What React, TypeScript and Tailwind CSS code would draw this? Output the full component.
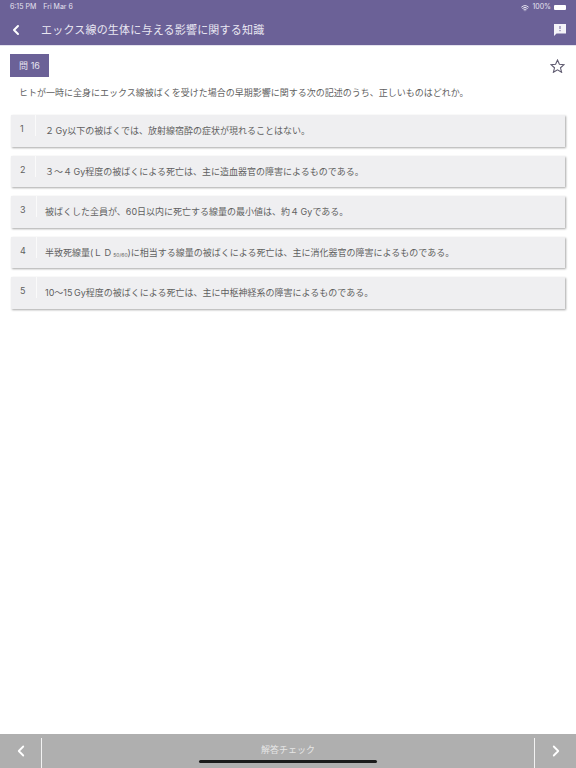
import React from 'react';
import { ChevronLeft, ChevronRight, Wifi } from 'lucide-react';

const Gy = () => <span className="ml-[1.5px]">Gy</span>;

const choices: { no: string; text: React.ReactNode; line: string; pad: string }[] = [
    { no: '1', line: 'w-[25px]', pad: 'pl-[9px]', text: <>２<Gy />以下の被ばくでは、放射線宿酔の症状が現れることはない。</> },
    { no: '2', line: 'w-[25px]', pad: 'pl-[9px]', text: <>３～４<Gy />程度の被ばくによる死亡は、主に造血器官の障害によるものである。</> },
    { no: '3', line: 'w-[26px]', pad: 'pl-[8px]', text: <>被ばくした全員が、60日以内に死亡する線量の最小値は、約４<Gy />である。</> },
    {
        no: '4',
        line: 'w-[26px]',
        pad: 'pl-[8px]',
        text: (
            <>
                半致死線量(<span className="tracking-[1px]">ＬＤ</span><span className="align-[-1px] text-[5px]">50/60</span>)に相当する線量の被ばくによる死亡は、主に消化器官の障害によるものである。
            </>
        ),
    },
    { no: '5', line: 'w-[26px]', pad: 'pl-[8px]', text: <>10～15<Gy />程度の被ばくによる死亡は、主に中枢神経系の障害によるものである。</> },
];

export default function App() {
    return (
        <div className="relative flex h-[768px] w-[576px] flex-col overflow-hidden bg-white font-['Inter','Noto_Sans_CJK_JP',sans-serif] text-[#5f5f5f]">
            <header className="h-[46px] shrink-0 border-b border-[#e4e2ee] bg-[#6b6197] text-white">
                <div className="flex h-[14px] items-center justify-between px-[10px] pt-[1px] text-[7px] text-[#e6e3f0]">
                    <div className="flex gap-[7px]">
                        <span>6:15 PM</span>
                        <span>Fri Mar 6</span>
                    </div>
                    <div className="flex items-center gap-[3px]">
                        <Wifi size={8} strokeWidth={3} />
                        <span>100%</span>
                        <div className="h-[5px] w-[12px] rounded-[1px] bg-white" />
                    </div>
                </div>
                <div className="flex h-[31px] items-center pl-[8px] pr-[10px]">
                    <ChevronLeft size={16} strokeWidth={3} className="shrink-0" />
                    <h1 className="ml-[17px] flex-1 pt-[1px] text-[11px] tracking-[0.2px] text-[#e9e7f2]">エックス線の生体に与える影響に関する知識</h1>
                    <svg width="12" height="12" viewBox="0 0 12 12">
                        <path d="M0 0H12V9.5H2.5L0 12Z" fill="#f4f3f8" />
                        <rect x="5.5" y="2" width="1" height="3" fill="#6b6197" />
                        <rect x="5.5" y="6" width="1" height="1.2" fill="#6b6197" />
                    </svg>
                </div>
            </header>

            <main className="flex-1 px-[10px] pt-[8px]">
                <div className="flex items-start justify-between">
                    <div className="flex h-[23px] w-[39px] items-center justify-center bg-[#6b6197] text-[9px] text-[#e6e3f0]">問 16</div>
                    <svg width="15" height="14" viewBox="0 0 15 14" className="mr-[1px] mt-[5px]" fill="none" stroke="#5f5b70" strokeWidth="1.1" strokeLinejoin="miter">
                        <polygon points="7.5,1 9.4,5.3 14,5.7 10.5,8.8 11.6,13.3 7.5,10.9 3.4,13.3 4.5,8.8 1,5.7 5.6,5.3" />
                    </svg>
                </div>
                <p className="ml-[9px] mt-[9px] whitespace-nowrap text-[9px] leading-[13px]">
                    ヒトが一時に全身にエックス線被ばくを受けた場合の早期影響に関する次の記述のうち、正しいものはどれか。
                </p>
                <ul className="ml-[1px] mt-[16px] flex w-[554px] flex-col gap-[9px]">
                    {choices.map((c) => (
                        <li key={c.no} className="flex h-[31.5px] bg-[#efeff1] text-[9px] shadow-[1px_1px_2px_#a8a8a8]">
                            <div className={`${c.line} h-[21px] shrink-0 border-r border-[#fafafa] pl-[9px] pt-[7px] text-[9px] leading-[14px]`}>{c.no}</div>
                            <div className={`${c.pad} flex items-center whitespace-nowrap`}><span>{c.text}</span></div>
                        </li>
                    ))}
                </ul>
            </main>

            <footer className="relative flex h-[34px] shrink-0 bg-[#afafaf] text-white">
                <div className="flex w-[41px] items-center justify-center">
                    <ChevronLeft size={18} strokeWidth={2.4} />
                </div>
                <div className="mt-[4px] w-[1px] bg-[#f2f2f2]" />
                <div className="flex flex-1 items-start justify-center pt-[9px] text-[9px] text-[#e6e6e6]">解答チェック</div>
                <div className="mt-[4px] w-[1px] bg-[#f2f2f2]" />
                <div className="flex w-[41px] items-center justify-center">
                    <ChevronRight size={18} strokeWidth={2.4} />
                </div>
                <div className="absolute bottom-[5px] left-[199px] h-[3px] w-[178px] rounded-full bg-[#1a1a1a]" />
            </footer>
        </div>
    );
}
